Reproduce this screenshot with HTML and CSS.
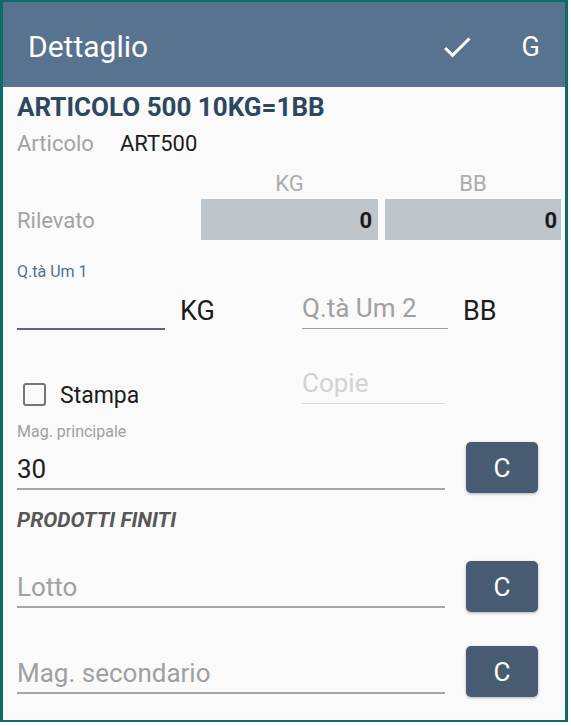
FILE: index.html
```html
<!DOCTYPE html>
<html lang="it">
<head>
<meta charset="utf-8">
<title>Dettaglio</title>
<link rel="stylesheet" href="styles.css">
</head>
<body>
<div class="frame">
  <header class="appbar">
    <h1 class="title">Dettaglio</h1>
    <svg class="icon-check" viewBox="0 0 24 24" aria-label="Conferma"><path d="M9 16.17L4.83 12l-1.42 1.41L9 19 21 7l-1.41-1.41z"/></svg>
    <span class="action-g">G</span>
  </header>
  <main class="content">
    <div class="heading">ARTICOLO 500 10KG=1BB</div>
    <div class="info-row"><span class="muted info-label">Articolo</span><span class="value">ART500</span></div>
    <div class="grid grid-head"><span></span><span>KG</span><span>BB</span></div>
    <div class="grid grid-row"><span class="muted row-label">Rilevato</span><span class="box">0</span><span class="box">0</span></div>
    <div class="float-label focused-label">Q.tà Um 1</div>
    <div class="qty-row">
      <div class="field field-focused"></div>
      <span class="unit">KG</span>
      <div class="field field-plain"><span class="hint">Q.tà Um 2</span></div>
      <span class="unit">BB</span>
    </div>
    <div class="print-row">
      <div class="check-group"><span class="checkbox"></span><span class="check-text">Stampa</span></div>
      <div class="field field-disabled"><span class="hint hint-disabled">Copie</span></div>
    </div>
    <div class="lookup-row lookup-first">
      <div class="lookup-col">
        <div class="float-label">Mag. principale</div>
        <div class="field field-wide field-value"><span class="text-value">30</span></div>
      </div>
      <button class="btn-c btn-first">C</button>
    </div>
    <div class="section-title">PRODOTTI FINITI</div>
    <div class="lookup-row lookup-lotto">
      <div class="field field-wide field-hint"><span class="hint">Lotto</span></div>
      <button class="btn-c">C</button>
    </div>
    <div class="lookup-row lookup-mag">
      <div class="field field-wide field-hint field-last"><span class="hint">Mag. secondario</span></div>
      <button class="btn-c">C</button>
    </div>
  </main>
</div>
</body>
</html>
```
FILE: styles.css
```css
html, body {
  margin: 0;
  padding: 0;
  background: #ffffff;
}
body {
  font-family: Roboto, "Noto Sans", Arial, sans-serif;
  width: 571px;
  height: 726px;
  overflow: hidden;
}
.frame {
  width: 568px;
  height: 722px;
  box-sizing: border-box;
  border: 2px solid #0d6b68;
  border-left-width: 3px;
  border-right-width: 3px;
  background: #fafafa;
  overflow: hidden;
}
.appbar {
  height: 85px;
  box-sizing: border-box;
  padding: 4px 25px 0 25px;
  display: flex;
  align-items: center;
  background: #57738f;
  color: #ffffff;
}
.title {
  flex: 1;
  margin: 0;
  font-size: 30px;
  font-weight: 400;
  line-height: 30px;
}
.icon-check {
  width: 36px;
  height: 36px;
  fill: #ffffff;
  margin-right: 47px;
}
.action-g {
  font-size: 27px;
  line-height: 30px;
}
.content {
  padding: 0 4px 0 14px;
}
.heading {
  height: 40px;
  line-height: 40px;
  font-size: 26px;
  font-weight: 700;
  color: #2c4861;
}
.info-row {
  height: 33px;
  line-height: 33px;
  font-size: 22px;
  display: flex;
}
.muted {
  color: #a3a3a3;
}
.info-label {
  width: 103px;
}
.value {
  color: #1c1c1c;
}
.grid {
  display: grid;
  grid-template-columns: 177px 177px 176px;
  column-gap: 7px;
}
.grid-head {
  height: 39px;
  box-sizing: border-box;
  padding-top: 8px;
  line-height: 31px;
  font-size: 22px;
  color: #acacac;
  text-align: center;
}
.grid-row {
  height: 41px;
  font-size: 22px;
}
.row-label {
  line-height: 39px;
  padding-top: 2px;
}
.box {
  background: #bec5cb;
  text-align: right;
  padding: 2px 6px 0 0;
  line-height: 39px;
  font-weight: 700;
  color: #1a1a1a;
}
.box + .box {
  padding-right: 4px;
}
.float-label {
  font-size: 16px;
  line-height: 16px;
  color: #a0a0a0;
}
.focused-label {
  margin-top: 24px;
  color: #56708c;
}
.field {
  box-sizing: border-box;
  border-bottom: 1px solid #9e9e9e;
}
.qty-row {
  height: 50px;
  display: grid;
  grid-template-columns: 148px 137px 146px auto;
  align-items: end;
}
.field-focused {
  height: 48px;
  border-bottom: 2px solid #4e6985;
}
.unit {
  font-size: 27px;
  line-height: 27px;
  padding-left: 15px;
  margin-bottom: 5px;
  color: #1c1c1c;
}
.field-plain {
  padding-bottom: 7px;
  margin-bottom: 1px;
}
.hint {
  display: block;
  font-size: 26px;
  line-height: 26px;
  color: #a0a0a0;
}
.print-row {
  margin-top: 35px;
  height: 45px;
  display: grid;
  grid-template-columns: 285px 143px;
  align-items: end;
}
.check-group {
  display: flex;
  align-items: center;
  height: 24px;
  margin-bottom: 4px;
  padding-left: 6px;
}
.checkbox {
  width: 19px;
  height: 19px;
  border: 2px solid #767676;
  border-radius: 3px;
}
.check-text {
  margin-left: 14px;
  padding-top: 4px;
  font-size: 23px;
  line-height: 24px;
  color: #1c1c1c;
}
.field-disabled {
  padding-bottom: 7px;
  margin-bottom: 6px;
  border-bottom-color: #dadada;
}
.hint-disabled {
  color: #d2d2d2;
}
.lookup-row {
  display: flex;
  align-items: flex-start;
}
.lookup-first {
  margin-top: 14px;
}
.lookup-col {
  width: 428px;
}
.field-wide {
  width: 428px;
  border-bottom: 2px solid #a5a5a5;
}
.field-value {
  margin-top: 16px;
  padding-bottom: 6px;
}
.text-value {
  display: block;
  font-size: 26px;
  line-height: 26px;
  color: #1c1c1c;
}
.btn-c {
  width: 72px;
  height: 51px;
  margin-left: 21px;
  border: none;
  border-radius: 5px;
  background: #475c72;
  color: #ffffff;
  font-family: Roboto, "Noto Sans", Arial, sans-serif;
  font-size: 26px;
  padding: 0;
  box-shadow: 0 1px 3px rgba(0, 0, 0, 0.3);
}
.btn-first {
  margin-top: 18px;
}
.section-title {
  margin-top: 17px;
  font-size: 21px;
  line-height: 21px;
  font-weight: 700;
  font-style: italic;
  color: #575757;
}
.lookup-lotto {
  margin-top: 30px;
  align-items: flex-end;
}
.lookup-mag {
  margin-top: 34px;
  align-items: flex-end;
}
.field-hint {
  padding-bottom: 6px;
  margin-bottom: 4px;
}
.field-last {
  margin-bottom: 3px;
}
```
